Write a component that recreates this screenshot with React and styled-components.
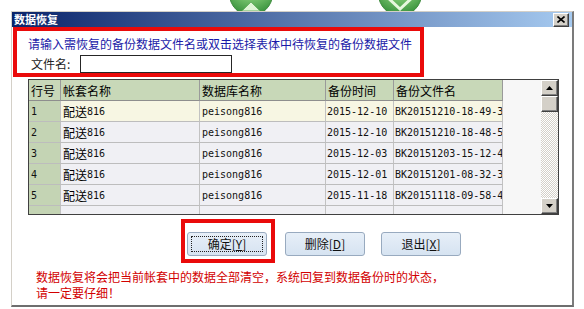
import React from "react";
import styled, { createGlobalStyle } from "styled-components";

const GlobalStyle = createGlobalStyle`
  html, body { margin: 0; padding: 0; background: #fff; }
  body {
    font-family: "Noto Sans CJK SC", "Liberation Sans", sans-serif;
    font-size: 12px;
    color: #000;
  }
  * { box-sizing: border-box; }
`;

const Page = styled.div`
  width: 584px;
  height: 309px;
  overflow: hidden;
  background: #fff;
`;

const TopStrip = styled.div`
  height: 11px;
  overflow: hidden;
  display: flex;
  gap: 105px;
  padding-left: 229px;
`;

const Window = styled.div`
  margin-left: 11px;
  width: 563px;
  border-top: 1px solid #d4d0c8;
  border-left: 1px solid #d4d0c8;
  border-right: 2px solid #7b7b7b;
  border-bottom: 2px solid #6e6e6e;
  background: #fff;
`;

const TitleBar = styled.div`
  height: 15px;
  display: flex;
  align-items: center;
  justify-content: space-between;
  padding: 0 3px 0 2px;
  background: linear-gradient(to right, #0a246a, #a6caf0);
`;

const Title = styled.span`
  color: #fff;
  font-weight: bold;
  font-size: 11px;
  line-height: 15px;
`;

const Raised = styled.div`
  background: #d4d0c8;
  border: 1px solid;
  border-color: #fff #404040 #404040 #fff;
  box-shadow: inset -1px -1px #808080;
  display: flex;
  align-items: center;
  justify-content: center;
`;

const CloseButton = styled(Raised)`
  width: 16px;
  height: 14px;
`;

const HintBox = styled.div`
  margin-left: 1px;
  width: 411px;
  height: 50px;
  border: 4px solid #ea0a0a;
  padding: 5px 0 0 11px;
`;

const Hint = styled.div`
  color: #1a1aa8;
  line-height: 16px;
  white-space: nowrap;
`;

const FileRow = styled.div`
  display: flex;
  align-items: center;
  margin-top: 3px;
  padding-left: 3px;
`;

const FileLabel = styled.span`
  width: 49px;
  line-height: 18px;
  color: #222;
`;

const FileInput = styled.input`
  width: 152px;
  height: 18px;
  border: 1px solid #262626;
  background: #fff;
  padding: 0 2px;
  font: inherit;
  outline: none;
`;

const TableFrame = styled.div`
  margin: 2px 0 0 16px;
  width: 531px;
  height: 136px;
  border: 1px solid #404040;
  display: flex;
  background: #f7f7f7;
`;

const Grid = styled.div`
  width: 474px;
  height: 134px;
  overflow: hidden;
  display: grid;
  grid-template-columns: 32px 139px 126px 68px 109px;
  grid-auto-rows: 21px;
  align-content: start;
`;

const cellBg = {
  head: "#c8d8b8",
  num: "#c4d4b4",
  selected: "#f7f6e3",
  plain: "#f0f0f4",
};

const Cell = styled.div`
  display: flex;
  align-items: center;
  padding-left: ${(p) => (p.$tight ? "1px" : "2px")};
  white-space: nowrap;
  overflow: hidden;
  background: ${(p) => cellBg[p.$kind]};
  border-right: 1px solid ${(p) => (p.$kind === "head" ? "#9a9a9a" : "#c2c2c2")};
  border-bottom: 1px solid ${(p) => (p.$kind === "head" ? "#8e8e8e" : "#bdbdbd")};
`;

const Mono = styled.span`
  font-family: "DejaVu Sans Mono", "Liberation Mono", monospace;
  font-size: 10px;
  color: #111;
`;

const Blank = styled.div`
  flex: 1;
  background: #f7f7f7;
`;

const ScrollBar = styled.div`
  width: 17px;
  display: flex;
  flex-direction: column;
  background-color: #d4d0c8;
  background-image: repeating-conic-gradient(#ffffff 0 25%, #d4d0c8 0 50%);
  background-size: 2px 2px;
`;

const ScrollButton = styled(Raised)`
  height: 16px;
`;

const Track = styled.div`
  flex: 1;
`;

const ButtonRow = styled.div`
  display: flex;
  align-items: flex-start;
  gap: 10px;
  margin-top: 4px;
  padding-left: 169px;
`;

const FocusBox = styled.div`
  border: 4px solid #ea0a0a;
  padding: 9px 4px 3px 2px;
`;

const OtherButtons = styled.div`
  display: flex;
  gap: 16px;
  margin-top: 13px;
`;

const Button = styled.div`
  width: 80px;
  height: 24px;
  display: flex;
  border: 1px solid #98aabf;
  border-radius: 3px;
  background: linear-gradient(#e7eff8, #d6e3f1);
  color: #111;
`;

const ButtonFace = styled.span`
  flex: 1;
  margin: 3px;
  display: flex;
  align-items: center;
  justify-content: center;
  border: 1px dotted ${(p) => (p.$focused ? "#222" : "transparent")};
  line-height: 14px;
`;

const Key = styled.span`
  text-decoration: underline;
`;

const Warning = styled.div`
  margin-top: 6px;
  padding: 0 0 4px 24px;
  color: #d20000;
  line-height: 16px;
`;

const Ball = ({ kind }) => (
  <svg width="44" height="11" viewBox="0 0 44 11">
    <defs>
      <radialGradient id={`ball-${kind}`} cx="50%" cy="20%" r="75%">
        <stop offset="0" stopColor="#d6f2cc" />
        <stop offset="0.55" stopColor="#78c46e" />
        <stop offset="1" stopColor="#3d9540" />
      </radialGradient>
    </defs>
    <circle cx="22" cy="-6" r="21.5" fill={`url(#ball-${kind})`} stroke="#3f8c3f" />
    {kind === "up" ? (
      <path d="M13 11 L22 2 L31 11 Z" fill="#dff5d6" stroke="#6bb265" />
    ) : (
      <path d="M8 -4 L22 9 L36 -4" fill="none" stroke="#e6f7de" strokeWidth="3" />
    )}
  </svg>
);

const Arrow = ({ down }) => (
  <svg width="7" height="4" viewBox="0 0 7 4">
    <path d={down ? "M0 0 H7 L3.5 4 Z" : "M0 4 H7 L3.5 0 Z"} fill="#000" />
  </svg>
);

// file names are cut by the column in the original grid
const rows = [
  ["1", "2015-12-10", "BK20151210-18-49-3"],
  ["2", "2015-12-10", "BK20151210-18-48-5"],
  ["3", "2015-12-03", "BK20151203-15-12-4"],
  ["4", "2015-12-01", "BK20151201-08-32-3"],
  ["5", "2015-11-18", "BK20151118-09-58-4"],
];

const headers = ["行号", "帐套名称", "数据库名称", "备份时间", "备份文件名"];

export default function App() {
  return (
    <Page>
      <GlobalStyle />
      <TopStrip>
        <Ball kind="up" />
        <Ball kind="x" />
      </TopStrip>
      <Window>
        <TitleBar>
          <Title>数据恢复</Title>
          <CloseButton>
            <svg width="8" height="7" viewBox="0 0 8 7">
              <path d="M0.5 0.5 L7.5 6.5 M7.5 0.5 L0.5 6.5" stroke="#000" strokeWidth="1.6" />
            </svg>
          </CloseButton>
        </TitleBar>

        <HintBox>
          <Hint>请输入需恢复的备份数据文件名或双击选择表体中待恢复的备份数据文件</Hint>
          <FileRow>
            <FileLabel>文件名:</FileLabel>
            <FileInput readOnly value="" />
          </FileRow>
        </HintBox>

        <TableFrame>
          <Grid>
            {headers.map((h) => (
              <Cell key={h} $kind="head">{h}</Cell>
            ))}
            {rows.map(([n, date, file], i) => {
              const kind = i === 0 ? "selected" : "plain";
              return (
                <React.Fragment key={n}>
                  <Cell $kind="num"><Mono>{n}</Mono></Cell>
                  <Cell $kind={kind}>配送<Mono>816</Mono></Cell>
                  <Cell $kind={kind}><Mono>peisong816</Mono></Cell>
                  <Cell $kind={kind} $tight><Mono>{date}</Mono></Cell>
                  <Cell $kind={kind} $tight><Mono>{file}</Mono></Cell>
                </React.Fragment>
              );
            })}
            <Cell $kind="num" />
            <Cell $kind="plain" />
            <Cell $kind="plain" />
            <Cell $kind="plain" />
            <Cell $kind="plain" />
          </Grid>
          <Blank />
          <ScrollBar>
            <ScrollButton><Arrow /></ScrollButton>
            <ScrollButton />
            <Track />
            <ScrollButton><Arrow down /></ScrollButton>
          </ScrollBar>
        </TableFrame>

        <ButtonRow>
          <FocusBox>
            <Button>
              <ButtonFace $focused>确定[<Key>Y</Key>]</ButtonFace>
            </Button>
          </FocusBox>
          <OtherButtons>
            <Button>
              <ButtonFace>删除[<Key>D</Key>]</ButtonFace>
            </Button>
            <Button>
              <ButtonFace>退出[<Key>X</Key>]</ButtonFace>
            </Button>
          </OtherButtons>
        </ButtonRow>

        <Warning>
          数据恢复将会把当前帐套中的数据全部清空，系统回复到数据备份时的状态，
          <br />
          请一定要仔细！
        </Warning>
      </Window>
    </Page>
  );
}
